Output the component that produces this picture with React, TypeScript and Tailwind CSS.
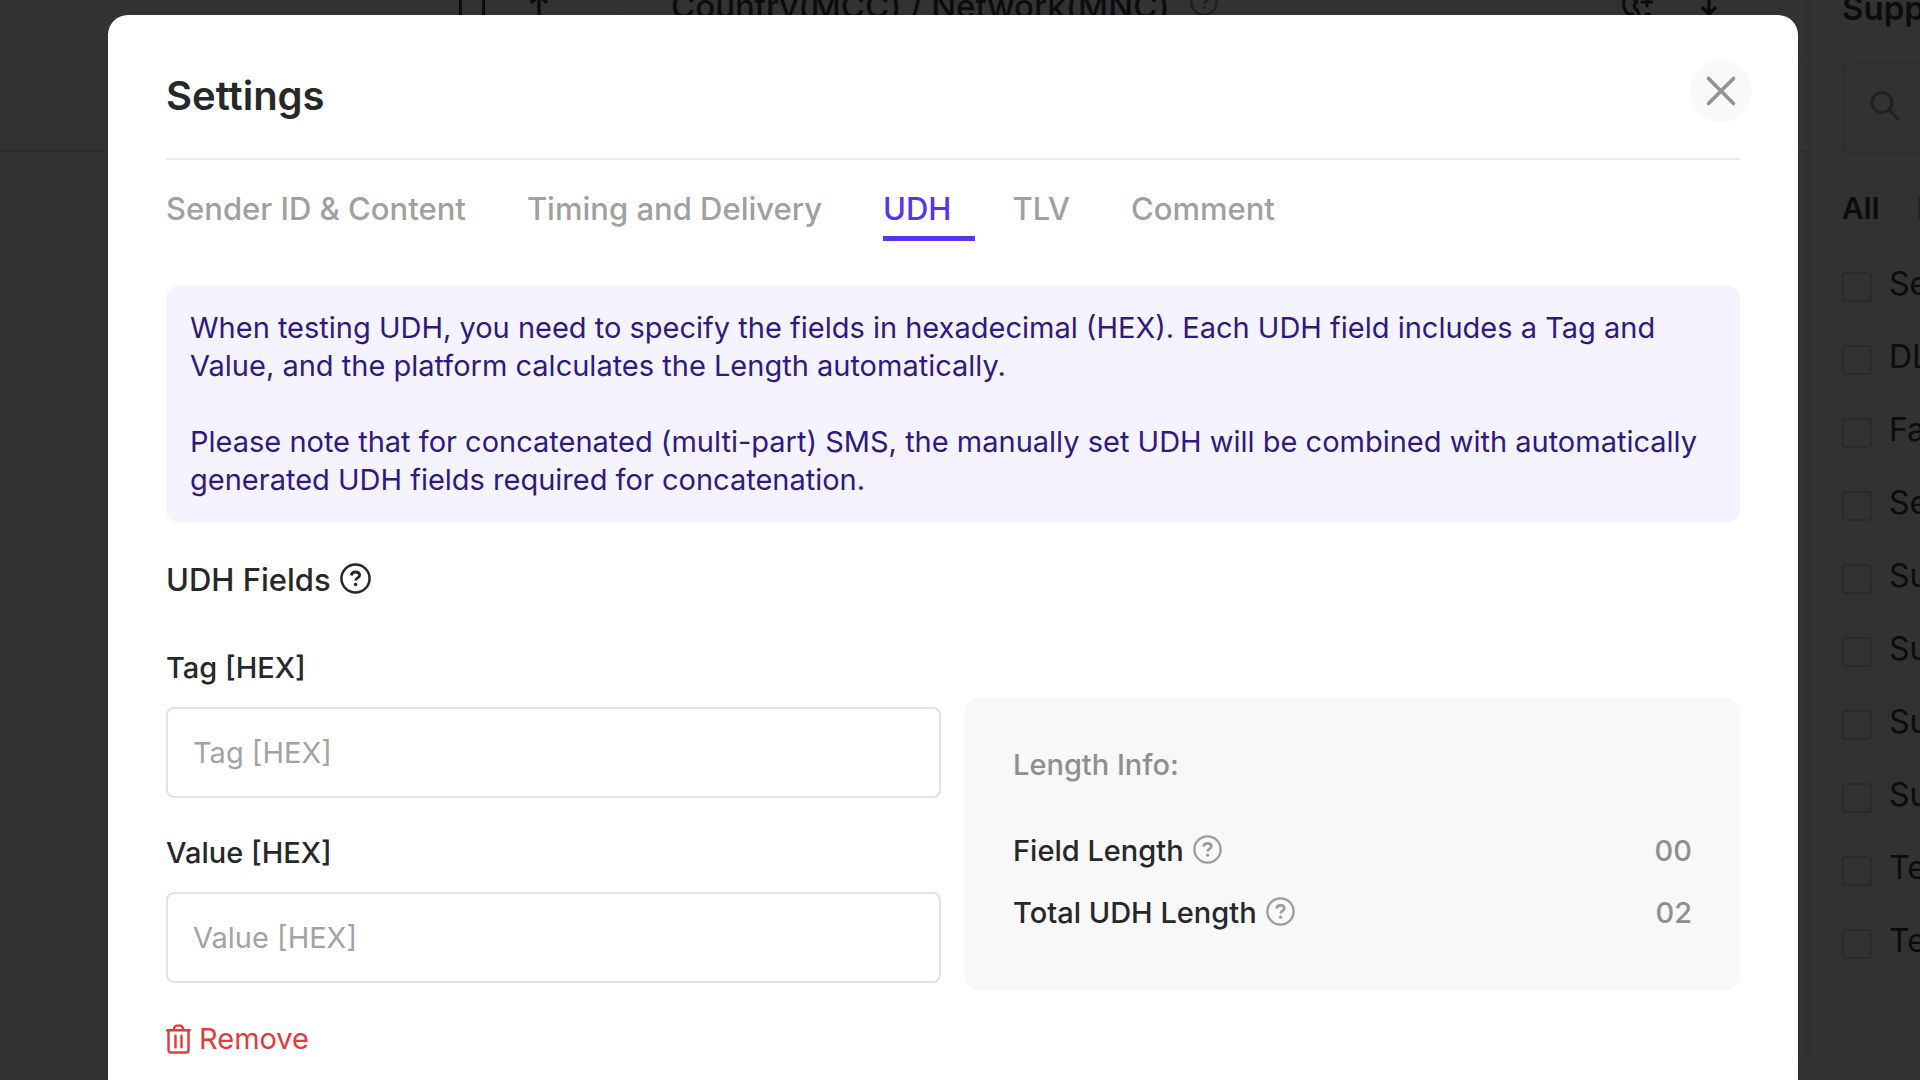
import { useState } from 'react'

const tabs = ['Sender ID & Content', 'Timing and Delivery', 'UDH', 'TLV', 'Comment']

const filters = ['Se', 'DL', 'Fa', 'Se', 'Su', 'Su', 'Su', 'Su', 'Te', 'Te']

const fields = [
  { id: 'tag', label: 'Tag [HEX]' },
  { id: 'value', label: 'Value [HEX]' },
]

const lengths = [
  { label: 'Field Length', value: '00' },
  { label: 'Total UDH Length', value: '02' },
]

function HelpIcon({ className }: { className: string }) {
  return (
    <svg viewBox="0 0 30 30" fill="none" stroke="currentColor" strokeWidth="2.4" className={className} aria-hidden="true">
      <circle cx="15" cy="15" r="13.6" />
      <path d="M10.9 12.1c.2-2.1 1.8-3.4 4.1-3.4 2.300 0 4 1.200 4 3.100 0 2.600-3.800 2.500-3.800 5.200" strokeWidth="2.700" />
      <circle cx="15.100" cy="20.900" r="1.700" fill="currentColor" stroke="none" />
    </svg>
  )
}

function TrashIcon() {
  return (
    <svg viewBox="0 0 25 30" fill="none" stroke="currentColor" strokeWidth="2.400" strokeLinecap="round" strokeLinejoin="round" className="h-[30px] w-[25px]" aria-hidden="true">
      <path d="M1.200 6.300h22.600M2.500 6.300v19.900a2.300 2.300 0 0 0 2.300 2.300h15.400a2.300 2.300 0 0 0 2.300-2.300V6.300" />
      <path d="M7.400 6l1.300-3.100c.3-.8 1-1.300 1.800-1.300h4c.8 0 1.500.5 1.800 1.300L17.600 6M9.500 11.800v11.400M15.500 11.800v11.400" />
    </svg>
  )
}

function CloseIcon() {
  return (
    <svg viewBox="0 0 32 32" fill="none" stroke="currentColor" strokeWidth="3.600" strokeLinecap="round" className="size-8" aria-hidden="true">
      <path d="M3.500 3.500l25 25M28.500 3.500l-25 25" />
    </svg>
  )
}

function SearchIcon() {
  return (
    <svg viewBox="0 0 30 30" fill="none" stroke="currentColor" strokeWidth="2.800" strokeLinecap="round" className="mb-1 size-[30px]" aria-hidden="true">
      <circle cx="12" cy="11.500" r="10" />
      <path d="M19 18.500l9 9.500" />
    </svg>
  )
}

function ArrowIcon({ down = false }: { down?: boolean }) {
  return (
    <svg viewBox="0 0 20 28" fill="none" stroke="currentColor" strokeWidth="3.400" className="h-7 w-5 shrink-0" aria-hidden="true">
      <path d={down ? 'M10 0v22M3 15l7 7 7-7' : 'M10 28V2M2 11l8-8 8 8'} />
    </svg>
  )
}

function PhoneIcon() {
  return (
    <svg viewBox="0 0 32 32" fill="none" stroke="currentColor" strokeWidth="3" strokeLinecap="round" className="size-8 shrink-0" aria-hidden="true">
      <path d="M8 3C1 8 1 18 7 24h5M13 6c-1 3 0 4 3 6M16 12c-4 3-4 5 0 8l2 4" />
      <path d="M21 12h10M26 7v9M25 24h3" />
    </svg>
  )
}

function Sidebar() {
  return (
    <aside className="w-[113px] shrink-0 overflow-hidden border-l-2 border-[#303030] pl-[33px]">
      <h2 className="-mt-3 text-[33px] leading-[40px] font-semibold">Supp</h2>
      <div className="mt-[33px] flex h-[94px] w-[120px] items-center rounded-[10px] border-2 border-[#2e2e2e] pl-[26px] text-[#202020]">
        <SearchIcon />
      </div>
      <div className="mt-[33px] flex gap-[37px] text-[30px] leading-[40px] font-semibold">
        <button>All</button>
        <button className="text-[#1c1c1c]">I</button>
      </div>
      <ul className="mt-11 flex flex-col gap-[43px]">
        {filters.map((name, i) => (
          <li key={i}>
            <label className="flex h-[30px] items-start gap-[17px] text-[32px] leading-[24px]">
              <input type="checkbox" className="size-[30px] shrink-0 appearance-none rounded-[4px] border-2 border-[#2a2a2a]" />
              {name}
            </label>
          </li>
        ))}
      </ul>
    </aside>
  )
}

function Background() {
  return (
    <div className="flex min-h-screen flex-col overflow-hidden bg-[#323232] text-[#0c0c0d]">
      <div className="flex flex-1">
        <main className="min-w-0 flex-1">
          <div className="-mt-12 flex h-[110px] items-center border-b-2 border-[#303030] pl-[459px]">
            <span className="h-10 w-[26px] shrink-0 border-x-[3px] border-[#0c0c0d]" />
            <span className="ml-11 flex shrink-0">
              <ArrowIcon />
            </span>
            <span className="ml-[72px] flex h-full flex-1 items-center gap-5 border-l-2 border-[#2f2f2f] pl-12 text-[33px] leading-[40px] font-medium whitespace-nowrap">
              Country(MCC) / Network(MNC)
              <HelpIcon className="mb-2 size-[28px] text-[#1f1f1f]" />
            </span>
            <span className="mr-4 flex h-full items-center gap-[46px] border-r-2 border-[#2f2f2f] pr-[70px]">
              <PhoneIcon />
              <ArrowIcon down />
            </span>
          </div>
          <div className="h-[90px] border-b-2 border-[#2d2d2d]" />
          <div className="mr-4 h-[117px] border-b-2 border-[#303030]" />
          <div className="mr-4 h-[237px] border-b-2 border-[#303030]" />
        </main>
        <Sidebar />
      </div>
      <footer className="h-[22px] border-t-2 border-[#2f2f2f]" />
    </div>
  )
}

function LengthInfo() {
  return (
    <div className="mt-12 rounded-[14px] bg-[#f8f8f8] px-12 pt-[49px] pb-[59px] text-[29px] leading-[36px] font-medium">
      <h3 className="text-[#8f8f8f]">Length Info:</h3>
      <dl className="mt-[50px] flex flex-col gap-[26px]">
        {lengths.map((item) => (
          <div key={item.label} className="flex justify-between">
            <dt className="flex items-center gap-[9px]">
              {item.label}
              <HelpIcon className="mb-1 size-[29px] text-[#9c9c9c]" />
            </dt>
            <dd className="text-[#8f8f8f]">{item.value}</dd>
          </div>
        ))}
      </dl>
    </div>
  )
}

export default function App() {
  const [active, setActive] = useState('UDH')

  return (
    <div className="relative min-h-screen font-[Inter,sans-serif]">
      <Background />
      <div className="absolute inset-0 pt-[15px] pr-[122px] pl-[108px]">
        <section role="dialog" aria-label="Settings" className="min-h-full rounded-t-[20px] bg-white px-[58px] text-[#26282a]">
          <header className="flex h-[145px] items-start justify-between border-b-2 border-[#e8e8e8] pt-[45px]">
            <h1 className="mt-3 text-[40px] leading-[48px] font-semibold">Settings</h1>
            <button aria-label="Close" className="-mr-3 flex size-[62px] items-center justify-center rounded-full bg-[#f9f9f9] text-[#909393]">
              <CloseIcon />
            </button>
          </header>

          <nav className="mt-[29px] flex gap-[37px] text-[31px] leading-[40px] font-medium">
            {tabs.map((tab) => (
              <button
                key={tab}
                onClick={() => setActive(tab)}
                className={
                  tab === active
                    ? 'border-b-[5px] border-[#5635ea] pr-6 pb-[7px] text-[#5635ea]'
                    : 'border-b-[5px] border-transparent pr-6 pb-[7px] text-[#9fa0a0]'
                }
              >
                {tab}
              </button>
            ))}
          </nav>

          <div className="mt-[45px] rounded-xl bg-[#f5f3ff] px-6 py-[23px] text-[29px] leading-[38px] text-[#2e1a80]">
            <p>
              When testing UDH, you need to specify the fields in hexadecimal (HEX). Each UDH field includes a Tag and
              Value, and the platform calculates the Length automatically.
            </p>
            <p className="mt-[38px]">
              Please note that for concatenated (multi-part) SMS, the manually set UDH will be combined with automatically
              generated UDH fields required for concatenation.
            </p>
          </div>

          <div className="mt-[38px] flex items-center gap-[9px]">
            <h2 className="text-[31px] leading-[40px] font-medium">UDH Fields</h2>
            <HelpIcon className="mb-1 size-[31px]" />
          </div>

          <div className="mt-[50px] grid grid-cols-2 items-start gap-6">
            <div className="flex flex-col gap-[37px]">
              {fields.map((field) => (
                <div key={field.id} className="flex flex-col gap-[21px] text-[29px] leading-[36px]">
                  <label htmlFor={field.id} className="font-medium">{field.label}</label>
                  <input
                    id={field.id}
                    placeholder={field.label}
                    className="h-[91px] w-full rounded-lg border-2 border-[#e2e2e2] px-[25px] outline-none placeholder:text-[#a3a3a3]"
                  />
                </div>
              ))}
            </div>
            <LengthInfo />
          </div>

          <button className="mt-[31px] flex items-center gap-2 text-[29px] leading-[36px] text-[#e23b3b]">
            <TrashIcon />
            Remove
          </button>
        </section>
      </div>
    </div>
  )
}
